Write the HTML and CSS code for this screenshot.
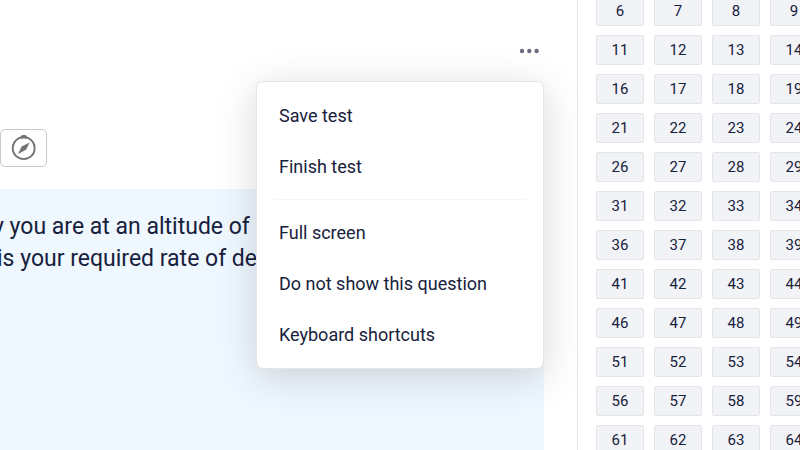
FILE: index.html
```html
<!DOCTYPE html>
<html lang="en">
<head>
    <meta charset="UTF-8">
    <meta name="viewport" content="width=device-width, initial-scale=1.0">
    <title>Test</title>
    <link rel="stylesheet" href="styles.css">
</head>
<body>

    <main class="main">
        <div class="toolbar">
            <button class="more-btn" type="button" aria-label="More options">
                <svg width="20" height="6" viewBox="0 0 20 6" fill="#6b6c80">
                    <circle cx="3" cy="3" r="2.2"/>
                    <circle cx="10.3" cy="3" r="2.2"/>
                    <circle cx="17.6" cy="3" r="2.2"/>
                </svg>
            </button>

            <!-- Options menu -->
            <div class="menu">
                <button class="menu-item" type="button">Save test</button>
                <button class="menu-item" type="button">Finish test</button>
                <hr class="divider">
                <button class="menu-item" type="button">Full screen</button>
                <button class="menu-item" type="button">Do not show this question</button>
                <button class="menu-item" type="button">Keyboard shortcuts</button>
            </div>
        </div>

        <div class="tools">
            <button class="tool-btn" type="button" aria-label="Flight computer">
                <svg width="26" height="28" viewBox="0 0 26 28">
                    <path d="M9.4 3.6 Q9.6 1 11.6 1 H14 Q16 1 16.2 3.6 V4.6 H9.4 Z" fill="#737373"/>
                    <circle cx="12.7" cy="14.2" r="11" fill="none" stroke="#737373" stroke-width="1.8"/>
                    <path d="M18.6 8.4 L15 15.8 L7 20 L10.6 12.6 Z" fill="#737373"/>
                </svg>
            </button>
        </div>

        <section class="question">
            <p>y you are at an altitude of 3<br>is your required rate of des</p>
        </section>
    </main>

    <!-- Question numbers -->
    <aside class="sidebar">
        <div class="grid" id="grid"></div>
    </aside>

    <script>
        const grid = document.getElementById('grid');

        for (let i = 6; i <= 65; i++) {
            const button = document.createElement('button');
            button.type = 'button';
            button.className = 'number';
            button.textContent = i;
            grid.appendChild(button);
        }
    </script>

</body>
</html>
```

FILE: styles.css
```css
* {
    box-sizing: border-box;
}

body {
    display: flex;
    height: 100vh;
    margin: 0;
    overflow: hidden;
    font-family: Roboto, sans-serif;
    color: #17213c;
    background-color: #fff;
}

button {
    padding: 0;
    font-family: inherit;
    color: inherit;
    cursor: pointer;
}

.main {
    flex: 1;
    min-width: 0;
    display: flex;
    flex-direction: column;
    padding-right: 33px;
}

.toolbar {
    position: relative;
    display: flex;
    justify-content: flex-end;
    padding: 36px 0 63px;
}

.more-btn {
    display: flex;
    align-items: center;
    justify-content: center;
    width: 30px;
    height: 30px;
    border: none;
    background: none;
}

/* Dropdown under the three dots */
.menu {
    position: absolute;
    top: 81px;
    right: 0;
    z-index: 5;
    width: 288px;
    padding: 8px 0;
    border: 1px solid #e3e5e8;
    border-radius: 7px;
    background-color: #fff;
    box-shadow: 0 8px 40px rgba(0, 0, 0, 0.16);
}

.menu-item {
    display: block;
    width: 100%;
    height: 51px;
    padding: 0 22px;
    border: none;
    background: none;
    font-size: 18px;
    text-align: left;
}

.divider {
    height: 1px;
    margin: 7px 16px;
    border: none;
    background-color: #f5f6f7;
}

.tools {
    display: flex;
    padding-bottom: 22px;
}

.tool-btn {
    display: flex;
    align-items: center;
    justify-content: center;
    width: 47px;
    height: 38px;
    border: 1px solid #c8c8c8;
    border-radius: 5px;
    background-color: #fff;
}

.question {
    flex: 1;
    overflow: hidden;
    padding: 22px 0;
    background-color: #eff7ff;
}

.question p {
    margin: 0 0 0 -3px;
    font-size: 23px;
    line-height: 32px;
    white-space: nowrap;
    text-indent: -4px;
}

.sidebar {
    flex: none;
    width: 223px;
    overflow: hidden;
    padding-left: 18px;
    border-left: 1px solid #e3e5e8;
}

.grid {
    display: grid;
    grid-template-columns: repeat(5, 48px);
    gap: 9px 10px;
    margin-top: -4px;
}

.number {
    height: 30px;
    border: 1px solid #e3e5e9;
    border-radius: 2px;
    background-color: #f1f3f7;
    font-size: 15px;
}
```
